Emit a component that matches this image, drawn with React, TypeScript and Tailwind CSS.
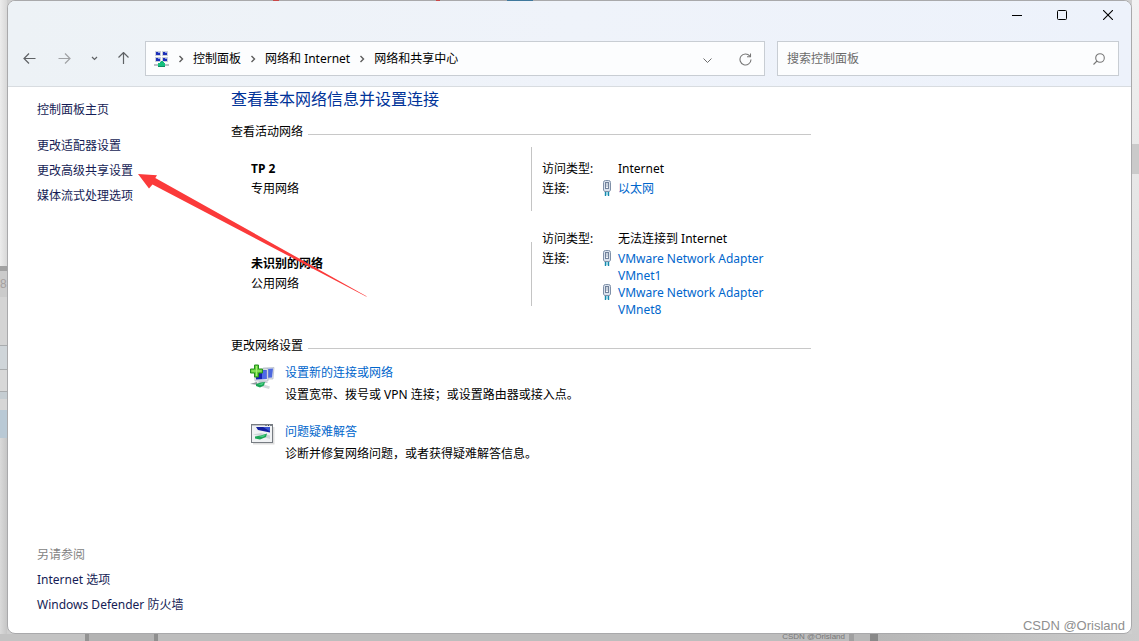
import { ReactNode } from 'react';

interface Adapter {
  label: string;
}

interface NetworkRowProps {
  name: string;
  kind: string;
  access: string;
  adapters: Adapter[];
}

function CrumbArrow() {
  return (
    <svg className="h-3 w-3 shrink-0" viewBox="0 0 12 12" fill="none" stroke="#5c5c5c" strokeWidth="1.4">
      <path d="M4.5 3 7.5 6 4.5 9" />
    </svg>
  );
}

function NetworkCenterIcon() {
  return (
    <svg className="h-4 w-4 shrink-0" viewBox="0 0 16 16" shapeRendering="crispEdges">
      {[
        [1, 0],
        [8, 0],
        [1, 6],
        [8, 6],
      ].map(([x, y]) => (
        <g key={`${x}-${y}`}>
          <rect x={x} y={y} width="6" height="5" fill="#c9ced8" />
          <rect x={x + 1} y={y + 1} width="4" height="3" fill="#1c2fb8" />
          <rect x={x + 3} y={y + 1} width="2" height="1" fill="#8fa5ee" />
        </g>
      ))}
      <rect x="0" y="13" width="15" height="2" fill="#b9bfc4" />
      <rect x="7" y="10" width="2" height="3" fill="#12b878" />
      <rect x="6" y="11" width="4" height="1" fill="#12b878" />
      <rect x="4" y="12" width="7" height="3" fill="#15c27e" />
      <rect x="4" y="15" width="7" height="1" fill="#0f8c62" />
    </svg>
  );
}

function PlugIcon() {
  return (
    <svg className="h-4 w-[10px] shrink-0" viewBox="0 0 10 16">
      <path d="M1.5 2.5Q1.5 .5 3.5 .5h3q2 0 2 2V10L7.5 11.5h-5L1.5 10z" fill="#dbe3ee" stroke="#7f90a8" />
      <rect x="3.5" y="2.5" width="3" height="6" fill="#f5f8fb" stroke="#71829b" />
      <path d="M5 3v4" stroke="#9eacbd" />
      <path d="M3.5 12v4M6.5 12v4" stroke="#1689ad" strokeWidth="1.4" />
      <path d="M5 12v3" stroke="#63c6dc" />
    </svg>
  );
}

function NewConnectionIcon() {
  return (
    <svg className="h-[26px] w-[25px]" viewBox="0 0 25 26">
      <path d="M13 4 24 3.5 23 15 14 15z" fill="#dfe3ea" stroke="#a9b0bd" strokeWidth=".6" />
      <path d="M15 5 23 4.5 22 13.5 15 14z" fill="#4d68de" />
      <path d="M4 6 18 4.5 18 17 5 17z" fill="#e6e9ef" stroke="#a4acba" strokeWidth=".6" />
      <path d="M5.5 7 16.5 6 16.5 15 6 15.5z" fill="#1622b0" />
      <path d="M12 6.5 16.5 6 16.5 15 12 15z" fill="#4e6ae8" />
      <path d="M9 17h7l2 2H8z" fill="#c6ccd4" />
      <path d="M1 19.5 8 18.5 20 22.5 19 25 12 23z" fill="#d5dadd" />
      <path d="M0 20 7 18v2.5z" fill="#8e989e" />
      <path d="M6 20 11 18.5 15 18 14 21.5 10 23.5 6 22z" fill="#1ba657" />
      <path d="M8 20.5 14 18.5 12 21z" fill="#4fd58a" />
      <path d="M4.5 1h4v4h4v4h-4v4h-4V9h-4V5h4z" fill="#66cf3b" stroke="#249020" />
      <path d="M6.5 2v10M1.5 7h10" stroke="#a3ef74" />
    </svg>
  );
}

function TroubleshootIcon() {
  return (
    <svg className="h-[22px] w-[25px]" viewBox="0 0 25 22">
      <path d="M3 20.500h20.500V4" stroke="#dedede" strokeWidth="2" fill="none" />
      <rect x="1.5" y="1.5" width="21" height="18" fill="#f0f2f4" stroke="#777c82" />
      <path d="M2 2.5h20" stroke="#c2c6cc" />
      <path d="M15.5 2.5h1M18 2.5h1M20.5 2.5h1" stroke="#38404a" />
      <path d="M6 4h14v5.5L8 7z" fill="#15209e" />
      <path d="M13 4h7v4.5z" fill="#3a54d2" />
      <path d="M3 11.5 11 10l9 2.5V16l-7-2z" fill="#cfd6d9" />
      <path d="M5 13.5 11 12.5 17 10.5 16 14 10 16.5 5 15.5z" fill="#1ba657" />
      <path d="M9 13.5 16 11.5 13 14z" fill="#4fd58a" />
    </svg>
  );
}

function SectionTitle({ children }: { children: ReactNode }) {
  return (
    <div className="flex h-5 items-center gap-[5px]">
      <h2 className="leading-5">{children}</h2>
      <span className="mt-1 h-px flex-1 bg-[#c8c8c8]" />
    </div>
  );
}

function NetworkRow({ name, kind, access, adapters }: NetworkRowProps) {
  return (
    <div className="flex min-h-16 items-center pl-5">
      <div className="w-[280px] leading-5">
        <p className="font-bold">{name}</p>
        <p>{kind}</p>
      </div>
      <div className="h-16 w-px bg-[#c4c4c4]" />
      <dl className="grid flex-1 grid-cols-[60px_1fr] pl-[10px]">
        <dt className="leading-5">访问类型:</dt>
        <dd className="pl-4 leading-5">{access}</dd>
        <dt className="leading-5">连接:</dt>
        <dd className="pt-px">
          {adapters.map((a) => (
            <div key={a.label} className="flex gap-[6px]">
              <PlugIcon />
              <a href="#" className="w-40 leading-[17px] text-[#0066cc]">
                {a.label}
              </a>
            </div>
          ))}
        </dd>
      </dl>
    </div>
  );
}

function TaskItem({ icon, title, text }: { icon: ReactNode; title: string; text: string }) {
  return (
    <div className="flex pl-[19px]">
      <div className="w-[35px] pt-[2px]">{icon}</div>
      <div className="leading-[22px]">
        <a href="#" className="block text-[#0066cc]">
          {title}
        </a>
        <p>{text}</p>
      </div>
    </div>
  );
}

function TitleBar() {
  return (
    <div className="flex h-7 justify-end">
      <button aria-label="最小化" className="flex w-[45px] items-center justify-center">
        <svg width="10" height="10" viewBox="0 0 10 10">
          <path d="M0 5.5h10" stroke="#000" />
        </svg>
      </button>
      <button aria-label="最大化" className="flex w-[46px] items-center justify-center">
        <svg width="10" height="10" viewBox="0 0 10 10">
          <rect x=".5" y=".5" width="9" height="9" rx="1" fill="none" stroke="#000" />
        </svg>
      </button>
      <button aria-label="关闭" className="flex w-[46px] items-center justify-center">
        <svg width="10" height="10" viewBox="0 0 10 10">
          <path d="M0 0 10 10M10 0 0 10" stroke="#000" strokeWidth="1.1" />
        </svg>
      </button>
    </div>
  );
}

function Toolbar() {
  return (
    <div className="flex h-[35px] items-stretch pr-3 pl-1">
      <button aria-label="后退" className="flex w-[34px] items-center justify-center">
        <svg width="13" height="12" viewBox="0 0 13 12" fill="none" stroke="#5f6265" strokeWidth="1.2">
          <path d="M12.5 5.5H1M6 .5l-5 5 5 5" />
        </svg>
      </button>
      <button aria-label="前进" className="flex w-9 items-center justify-center">
        <svg width="13" height="12" viewBox="0 0 13 12" fill="none" stroke="#a0a2a5" strokeWidth="1.2">
          <path d="M.5 5.5H12M7 .5l5 5-5 5" />
        </svg>
      </button>
      <button aria-label="最近位置" className="flex w-[25px] items-center justify-center">
        <svg width="7" height="5" viewBox="0 0 7 5" fill="none" stroke="#5f6265" strokeWidth="1.2">
          <path d="m1 1 2.500 2.500L6 1" />
        </svg>
      </button>
      <button aria-label="上移" className="flex w-[33px] items-center justify-center">
        <svg width="12" height="13" viewBox="0 0 12 13" fill="none" stroke="#5f6265" strokeWidth="1.2">
          <path d="M5.5 12V.5M.5 5.5l5-5 5 5" />
        </svg>
      </button>
      <nav className="ml-[5px] flex flex-[610] items-center border border-[#c8cdd3] bg-[#fcfdfe] pl-2">
        <NetworkCenterIcon />
        <div className="flex items-center gap-[6px] pl-[5px] whitespace-nowrap">
          <CrumbArrow />
          <a href="#">控制面板</a>
          <CrumbArrow />
          <a href="#">网络和 Internet</a>
          <CrumbArrow />
          <a href="#">网络和共享中心</a>
        </div>
        <button aria-label="展开地址" className="ml-auto flex h-full w-[38px] items-center justify-center pt-1">
          <svg width="9" height="6" viewBox="0 0 9 6" fill="none" stroke="#6d6d6d">
            <path d="m.5 .5 4 4 4-4" />
          </svg>
        </button>
        <button aria-label="刷新" className="flex h-full w-[38px] items-center justify-center pt-[2px]">
          <svg width="13" height="13" viewBox="0 0 13 13" fill="none" stroke="#777">
            <path d="M10.8 3A5.5 5.5 0 1 0 12 6.5M11.5 .5v3.2H8" strokeWidth="1.1" />
          </svg>
        </button>
      </nav>
      <label className="ml-3 flex flex-[318] items-center border border-[#c8cdd3] bg-[#fcfdfe] pr-[13px] pl-[9px]">
        <input
          type="search"
          aria-label="搜索控制面板"
          placeholder="搜索控制面板"
          className="min-w-0 flex-1 bg-transparent outline-none placeholder:text-[#6b6b6b]"
        />
        <svg width="12" height="12" viewBox="0 0 12 12" fill="none" stroke="#777" strokeWidth="1.1">
          <circle cx="7" cy="5" r="4.3" />
          <path d="M4 8 .5 11.5" />
        </svg>
      </label>
    </div>
  );
}

function Sidebar() {
  return (
    <aside className="flex w-[223px] shrink-0 flex-col pt-[10px] pb-4 pl-[29px] leading-[25px] text-[#151c55]">
      <a href="#">控制面板主页</a>
      <div className="mt-[11px] flex flex-col">
        <a href="#">更改适配器设置</a>
        <a href="#">更改高级共享设置</a>
        <a href="#">媒体流式处理选项</a>
      </div>
      <div className="mt-auto flex flex-col">
        <span className="text-[#838383]">另请参阅</span>
        <a href="#">Internet 选项</a>
        <a href="#">Windows Defender 防火墙</a>
      </div>
    </aside>
  );
}

// Edges of the windows that sit behind this one
function LeftBackdrop() {
  return (
    <div className="flex flex-col font-['Liberation_Sans',sans-serif] leading-[26px] text-[#a5a09f]">
      <div className="h-[266px] bg-linear-to-r from-[#ececec] to-[#d8d8d8]" />
      <div className="h-[5px] bg-[#a2a2a2]" />
      <div className="h-[26px] bg-[#cbcbcb]">8</div>
      <div className="h-12 bg-[#d4d4d4]" />
      <div className="h-[25px] border-y border-[#a9acae] bg-[#cfd5d9]" />
      <div className="h-[22px] border-b border-[#a9acae] bg-[#d8d8d8]" />
      <div className="h-[7px] bg-[#c5cdd2]" />
      <div className="h-[11px] bg-[#d6d6d6]" />
      <div className="h-7 bg-[#b9c9d5]" />
      <div className="flex-1 bg-linear-to-r from-[#dadada] to-[#c6c6c6]" />
    </div>
  );
}

function BottomBackdrop() {
  return (
    <div className="col-span-3 flex h-[7px] bg-[#bcbcbc] font-['Liberation_Sans',sans-serif] text-[8px] leading-[6px] text-[#777]">
      <div className="w-[85px] bg-[#c3c3c3]" />
      <div className="w-1 bg-[#939393]" />
      <div className="w-[65px] bg-[#b3b3b3]" />
      <div className="w-1 bg-[#8f8f8f]" />
      <div className="flex-1 rounded-bl bg-[#bdbdbd] pr-1 text-right">CSDN @Orisland</div>
      <div className="w-[5px] bg-[#a0a0a0]" />
      <div className="w-4 bg-[#b8b8b8]" />
      <div className="w-2 bg-[#898989]" />
      <div className="w-[261px] bg-linear-to-r from-[#b7b7b7] to-[#cccccc]" />
    </div>
  );
}

export default function App() {
  return (
    <div className="relative grid min-h-screen grid-cols-[7px_1fr_7px] grid-rows-[1fr_auto] bg-[#cfcfcf] font-['Noto_Sans','Noto_Sans_CJK_SC',sans-serif] text-[12px] text-black">
      <LeftBackdrop />
      <div className="flex min-w-0 flex-col overflow-hidden rounded-lg border border-[#a9a9ab] bg-white">
        <header className="border-b border-[#d8dce0] bg-linear-to-r from-[#edf2f6] via-[#eff3fa] to-[#edf2fb] pb-[10px]">
          <TitleBar />
          <div className="pt-3">
            <Toolbar />
          </div>
        </header>
        <div className="flex flex-1">
          <Sidebar />
          <main className="w-full max-w-[580px]">
            <h1 className="text-[16px] leading-6 text-[#003399]">查看基本网络信息并设置连接</h1>
            <div className="mt-[11px]">
              <SectionTitle>查看活动网络</SectionTitle>
            </div>
            <div className="mt-[5px] flex flex-col gap-[18px]">
              <NetworkRow name="TP 2" kind="专用网络" access="Internet" adapters={[{ label: '以太网' }]} />
              <NetworkRow
                name="未识别的网络"
                kind="公用网络"
                access="无法连接到 Internet"
                adapters={[{ label: 'VMware Network Adapter VMnet1' }, { label: 'VMware Network Adapter VMnet8' }]}
              />
            </div>
            <div className="mt-[18px]">
              <SectionTitle>更改网络设置</SectionTitle>
            </div>
            <div className="mt-[6px] flex flex-col gap-[15px]">
              <TaskItem
                icon={<NewConnectionIcon />}
                title="设置新的连接或网络"
                text="设置宽带、拨号或 VPN 连接；或设置路由器或接入点。"
              />
              <TaskItem icon={<TroubleshootIcon />} title="问题疑难解答" text="诊断并修复网络问题，或者获得疑难解答信息。" />
            </div>
          </main>
        </div>
      </div>
      <div className="flex flex-col bg-linear-to-b from-[#f2f2f2] to-[#cccccc]">
        <div className="mt-36 h-[30px] bg-[#cacaca]" />
      </div>
      <BottomBackdrop />

      {/* Bits of the page behind showing along the top edge */}
      <div className="absolute top-0 left-[273px] flex h-px">
        <span className="w-[6px] bg-[#c94848]" />
        <span className="ml-[157px] w-1 bg-[#c94848]" />
        <span className="ml-[67px] w-[26px] bg-[#3f789c]" />
      </div>

      {/* Arrow pointing at the advanced sharing link */}
      <svg className="pointer-events-none absolute top-[173px] left-[137px]" width="232" height="126" viewBox="137 173 232 126">
        <path d="M138 174 157 175.3 155.3 178 367 296.500 366 296.500 152.500 184.500 149 188.500z" fill="#fb3a3a" />
      </svg>
      <span className="absolute right-[14px] bottom-[5px] font-['Liberation_Sans',sans-serif] text-[13px] leading-5 text-[#8f8f8f]">
        CSDN @Orisland
      </span>
    </div>
  );
}
